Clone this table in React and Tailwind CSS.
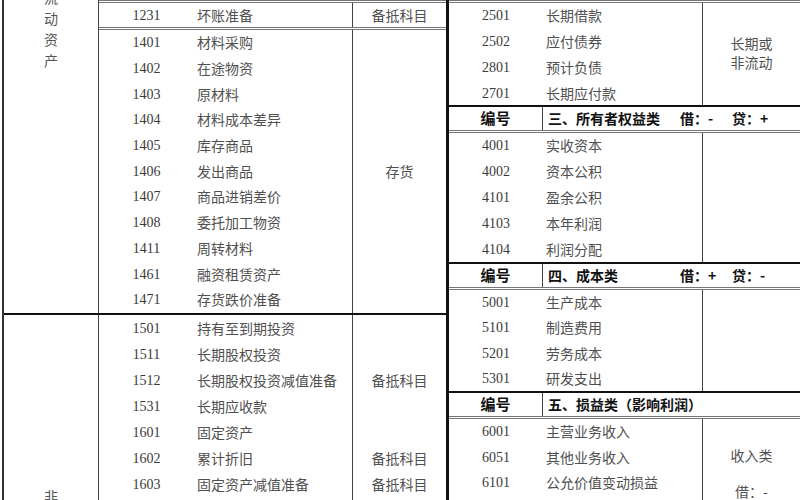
import React from 'react'

// 会计科目表截图复刻：左侧资产类，右侧负债/权益/成本/损益类
const cjk = '"Noto Sans CJK SC", "Noto Sans", sans-serif'
const num = '"Liberation Serif", "DejaVu Serif", serif'

const liudong = [
  ['1401', '材料采购'], ['1402', '在途物资'], ['1403', '原材料'], ['1404', '材料成本差异'],
  ['1405', '库存商品'], ['1406', '发出商品'], ['1407', '商品进销差价'], ['1408', '委托加工物资'],
  ['1411', '周转材料'], ['1461', '融资租赁资产'], ['1471', '存货跌价准备'],
]

const feiliudong = [
  ['1501', '持有至到期投资', ''], ['1511', '长期股权投资', ''], ['1512', '长期股权投资减值准备', '备抵科目'],
  ['1531', '长期应收款', ''], ['1601', '固定资产', ''], ['1602', '累计折旧', '备抵科目'],
  ['1603', '固定资产减值准备', '备抵科目'],
]

function Fila({ codigo, nombre, alto, ancho = 'w-[95px]' }) {
  return (
    <div className="flex items-center" style={{ height: alto }}>
      <span className={`${ancho} text-center text-[14px] text-[#3a3a3a]`} style={{ fontFamily: num }}>{codigo}</span>
      <span className="pl-[3px] text-[14px] text-[#505050] whitespace-nowrap">{nombre}</span>
    </div>
  )
}

function Cabecera({ titulo, deb, cred }) {
  return (
    <div className="flex h-[23px] items-center font-bold text-[14px] text-[#111]">
      <span className="w-[94px] h-full flex items-center justify-center border-r border-[#444] text-[15px]">编号</span>
      <span className="pl-[5px] w-[137px] whitespace-nowrap">{titulo}</span>
      {deb && <span className="w-[52px] whitespace-nowrap">{deb}</span>}
      {cred && <span className="whitespace-nowrap">{cred}</span>}
    </div>
  )
}

function Seccion({ filas, alto, nota, clase = '' }) {
  return (
    <div className={`flex ${clase}`}>
      <div className="w-[254px] border-r border-[#444]">
        {filas.map(([c, n]) => <Fila key={c} codigo={c} nombre={n} alto={alto} ancho="w-[94px]" />)}
      </div>
      <div className="flex-1 flex flex-col items-center text-[14px] text-[#505050]">{nota}</div>
    </div>
  )
}

export default function App() {
  return (
    <div className="w-[800px] h-[500px] overflow-hidden bg-white flex pl-[2px]" style={{ fontFamily: cjk }}>
      {/* Tabla izquierda: activos */}
      <div className="w-[447px] shrink-0 flex flex-col border-l-2 border-l-[#333] border-r-[3px] border-r-[#111]">
        <div className="h-[315px] shrink-0 flex border-b-2 border-[#111]">
          <div className="w-[95px] border-r border-[#444] overflow-hidden">
            <div className="-mt-[13px] flex flex-col items-center leading-[21px] text-[14px] text-[#555]">
              <span>流</span><span>动</span><span>资</span><span>产</span>
            </div>
          </div>
          <div className="flex-1 flex flex-col">
            <div className="h-[27px] flex border-t-[3px] border-double border-[#777]">
              <div className="w-[254px] border-r border-[#444]">
                <Fila codigo="1231" nombre="坏账准备" alto="24px" />
              </div>
              <div className="flex-1 flex items-center justify-center text-[14px] text-[#505050]">备抵科目</div>
            </div>
            <div className="flex-1 flex border-t-[3px] border-double border-[#777]">
              <div className="w-[254px] border-r border-[#444]">
                {liudong.map(([c, n]) => <Fila key={c} codigo={c} nombre={n} alto="25.7px" />)}
              </div>
              <div className="flex-1 flex items-center justify-center text-[14px] text-[#505050]">存货</div>
            </div>
          </div>
        </div>
        <div className="flex-1 flex">
          <div className="w-[95px] border-r border-[#444] flex flex-col items-center pt-[171px] text-[14px] text-[#555] leading-[21px]">
            <span>非</span>
          </div>
          <div className="flex-1">
            {feiliudong.map(([c, n, nota]) => (
              <div key={c} className="flex h-[26px]">
                <div className="w-[254px] border-r border-[#444]">
                  <Fila codigo={c} nombre={n} alto="26px" />
                </div>
                <div className="flex-1 flex items-center justify-center text-[14px] text-[#505050]">{nota}</div>
              </div>
            ))}
            <div className="h-[20px] w-[254px] border-r border-[#444]" />
          </div>
        </div>
      </div>

      {/* Tabla derecha: pasivos, patrimonio, costos, resultados */}
      <div className="flex-1 flex flex-col">
        <Seccion
          clase="h-[107px] shrink-0 border-t-[3px] border-double border-[#777] border-b-2 border-b-[#111]"
          alto="25.75px"
          filas={[['2501', '长期借款'], ['2502', '应付债券'], ['2801', '预计负债'], ['2701', '长期应付款']]}
          nota={<div className="flex-1 flex flex-col justify-center leading-[19px] pb-[3px] text-center"><span>长期或</span><span>非流动</span></div>}
        />
        <div className="border-b-[3px] border-double border-[#777]">
          <Cabecera titulo="三、所有者权益类" deb="借：-" cred="贷：+" />
        </div>
        <Seccion
          clase="h-[131px] shrink-0 border-b-2 border-[#111]"
          alto="25.8px"
          filas={[['4001', '实收资本'], ['4002', '资本公积'], ['4101', '盈余公积'], ['4103', '本年利润'], ['4104', '利润分配']]}
          nota={null}
        />
        <div className="border-b-[3px] border-double border-[#777]">
          <Cabecera titulo="四、成本类" deb="借：+" cred="贷：-" />
        </div>
        <Seccion
          clase="h-[103px] shrink-0 border-b-2 border-[#111]"
          alto="25.25px"
          filas={[['5001', '生产成本'], ['5101', '制造费用'], ['5201', '劳务成本'], ['5301', '研发支出']]}
          nota={null}
        />
        <div className="border-b-[3px] border-double border-[#777]">
          <Cabecera titulo="五、损益类（影响利润）" />
        </div>
        <Seccion
          clase="flex-1"
          alto="25.5px"
          filas={[['6001', '主营业务收入'], ['6051', '其他业务收入'], ['6101', '公允价值变动损益']]}
          nota={<div className="pt-[27px] flex flex-col items-center gap-[18px] leading-[18px]"><span>收入类</span><span>借：-</span></div>}
        />
      </div>
    </div>
  )
}
